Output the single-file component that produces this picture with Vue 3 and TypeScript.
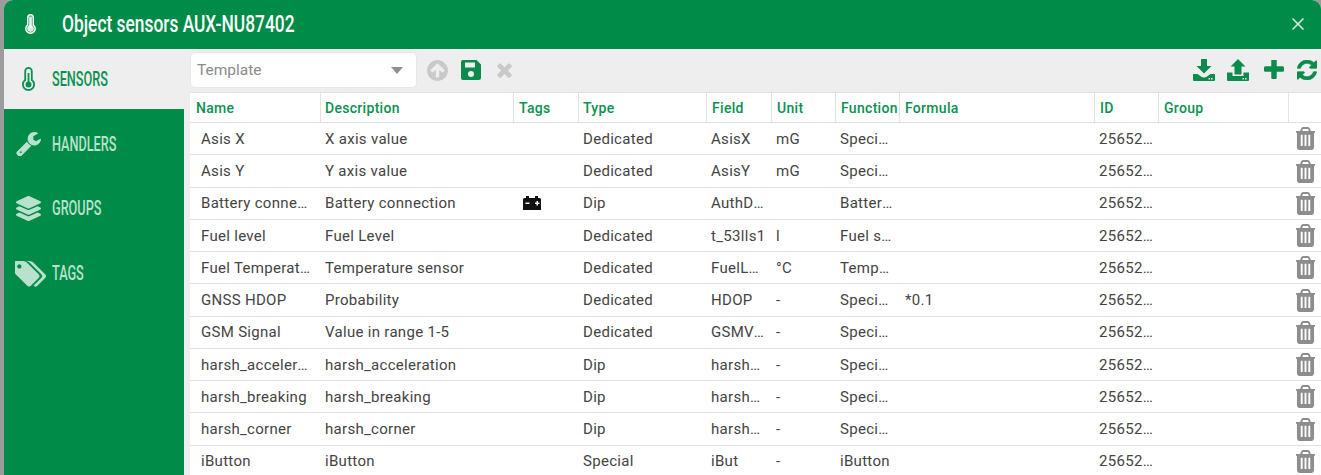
<script setup lang="ts">
interface SensorRow {
  name: string;
  description: string;
  tag?: boolean;
  type: string;
  field: string;
  unit: string;
  fn: string;
  formula: string;
}

const columns = ["Name", "Description", "Tags", "Type", "Field", "Unit", "Function", "Formula", "ID", "Group", ""];

const rows: SensorRow[] = [
  { name: "Asis X", description: "X axis value", type: "Dedicated", field: "AsisX", unit: "mG", fn: "Specified", formula: "" },
  { name: "Asis Y", description: "Y axis value", type: "Dedicated", field: "AsisY", unit: "mG", fn: "Specified", formula: "" },
  { name: "Battery connection", description: "Battery connection", tag: true, type: "Dip", field: "AuthDevice", unit: "", fn: "Battery level", formula: "" },
  { name: "Fuel level", description: "Fuel Level", type: "Dedicated", field: "t_53lls1", unit: "l", fn: "Fuel sensor", formula: "" },
  { name: "Fuel Temperature", description: "Temperature sensor", type: "Dedicated", field: "FuelLevel", unit: "°C", fn: "Temperature", formula: "" },
  { name: "GNSS HDOP", description: "Probability", type: "Dedicated", field: "HDOP", unit: "-", fn: "Specified", formula: "*0.1" },
  { name: "GSM Signal", description: "Value in range 1-5", type: "Dedicated", field: "GSMValue", unit: "-", fn: "Specified", formula: "" },
  { name: "harsh_acceleration", description: "harsh_acceleration", type: "Dip", field: "harsh_acc", unit: "-", fn: "Specified", formula: "" },
  { name: "harsh_breaking", description: "harsh_breaking", type: "Dip", field: "harsh_br", unit: "-", fn: "Specified", formula: "" },
  { name: "harsh_corner", description: "harsh_corner", type: "Dip", field: "harsh_co", unit: "-", fn: "Specified", formula: "" },
  { name: "iButton", description: "iButton", type: "Special", field: "iBut", unit: "-", fn: "iButton", formula: "" },
];

const tabs = [
  { label: "SENSORS", icon: "thermo", active: true },
  { label: "HANDLERS", icon: "wrench", active: false },
  { label: "GROUPS", icon: "layers", active: false },
  { label: "TAGS", icon: "tags", active: false },
];

const wrench = "M448 1472q0-26-19-45t-45-19-45 19-19 45 19 45 45 19 45-19 19-45zm644-420l-682 682q-37 37-90 37-52 0-91-37l-106-108q-38-36-38-90 0-53 38-91l681-681q39 98 114.5 173.5t173.5 114.5zm634-435q0 39-23 106-47 134-164.5 217.5t-258.5 83.5q-185 0-316.5-131.5t-131.5-316.5 131.5-316.5 316.5-131.5q58 0 121.5 16.5t107.5 46.5q16 11 16 28t-16 28l-293 169v224l193 107q5-3 79-48.5t135.5-81 70.5-35.5q15 0 23.5 10t8.5 25z";
const layers = "M12.41 148.02l232.94 105.67c6.8 3.09 14.49 3.09 21.29 0l232.94-105.67c16.55-7.51 16.55-32.52 0-40.03L266.65 2.31a25.607 25.607 0 0 0-21.29 0L12.41 107.98c-16.55 7.51-16.55 32.53 0 40.04zm487.18 88.28l-58.09-26.33-161.64 73.27c-7.56 3.43-15.59 5.17-23.86 5.17s-16.29-1.74-23.86-5.17L70.51 209.97l-58.1 26.33c-16.55 7.5-16.55 32.5 0 40l232.94 105.59c6.8 3.08 14.49 3.08 21.29 0L499.59 276.3c16.55-7.5 16.55-32.5 0-40zm0 127.8l-57.87-26.23-161.86 73.37c-7.56 3.43-15.59 5.17-23.86 5.17s-16.29-1.74-23.86-5.17L70.29 337.87 12.41 364.1c-16.55 7.5-16.55 32.5 0 40l232.94 105.59c6.8 3.08 14.49 3.08 21.29 0L499.59 404.1c16.55-7.5 16.55-32.5 0-40z";
const tags = "M384 448q0-53-37.5-90.5t-90.5-37.5-90.5 37.5-37.5 90.5 37.5 90.5 90.5 37.5 90.5-37.5 37.5-90.5zm1067 576q0 53-37 90l-491 492q-39 37-91 37-53 0-90-37l-715-716q-38-37-64.5-101t-26.5-117v-416q0-52 38-90t90-38h416q53 0 117 26.5t102 64.5l715 714q37 39 37 91zm384 0q0 53-37 90l-491 492q-39 37-91 37-36 0-59-14t-53-45l470-470q37-37 37-90 0-52-37-91l-715-714q-38-38-102-64.5t-117-26.5h224q53 0 117 26.5t102 64.5l715 714q37 39 37 91z";
const refresh = "M1639 1056q0 5-1 7-64 268-268 434.5t-478 166.5q-146 0-282.5-55t-243.5-157l-129 129q-19 19-45 19t-45-19-19-45v-448q0-26 19-45t45-19h448q26 0 45 19t19 45-19 45l-137 137q71 66 161 102t187 36q134 0 250-65t186-179q11-17 53-117 8-23 30-23h192q13 0 22.5 9.5t9.5 22.5zm25-800v448q0 26-19 45t-45 19h-448q-26 0-45-19t-19-45 19-45l138-138q-148-137-349-137-134 0-250 65t-186 179q-11 17-53 117-8 23-30 23h-199q-13 0-22.5-9.5t-9.5-22.5v-7q65-268 270-434.5t480-166.5q146 0 284 55.5t245 156.5l130-129q19-19 45-19t45 19 19 45z";
const circleUp = "M1412 895q0-27-18-45l-362-362-91-91q-18-18-45-18t-45 18l-91 91-362 362q-18 18-18 45t18 45l91 91q18 18 45 18t45-18l189-189v502q0 26 19 45t45 19h128q26 0 45-19t19-45v-502l189 189q19 19 45 19t45-19l91-91q18-18 18-45zm252-1q0 209-103 385.5t-279.5 279.5-385.5 103-385.5-103-279.5-279.5-103-385.5 103-385.5 279.5-279.5 385.5-103 385.5 103 279.5 279.5 103 385.5z";
const times = "M1490 1322q0 40-28 68l-136 136q-28 28-68 28t-68-28l-294-294-294 294q-28 28-68 28t-68-28l-136-136q-28-28-28-68t28-68l294-294-294-294q-28-28-28-68t28-68l136-136q28-28 68-28t68 28l294 294 294-294q28-28 68-28t68 28l136 136q28 28 28 68t-28 68l-294 294 294 294q28 28 28 68z";
const plus = "M1600 736v192q0 40-28 68t-68 28h-416v416q0 40-28 68t-68 28h-192q-40 0-68-28t-28-68v-416h-416q-40 0-68-28t-28-68v-192q0-40 28-68t68-28h416v-416q0-40 28-68t68-28h192q40 0 68 28t28 68v416h416q40 0 68 28t28 68z";
const trash = "M704 1376v-704q0-14-9-23t-23-9h-64q-14 0-23 9t-9 23v704q0 14 9 23t23 9h64q14 0 23-9t9-23zm256 0v-704q0-14-9-23t-23-9h-64q-14 0-23 9t-9 23v704q0 14 9 23t23 9h64q14 0 23-9t9-23zm256 0v-704q0-14-9-23t-23-9h-64q-14 0-23 9t-9 23v704q0 14 9 23t23 9h64q14 0 23-9t9-23zm-544-992h448l-48-117q-7-9-17-11h-317q-10 2-17 11zm928 32v64q0 14-9 23t-23 9h-96v948q0 83-47 143.5t-113 60.5h-832q-66 0-113-58.5t-47-141.5v-952h-96q-14 0-23-9t-9-23v-64q0-14 9-23t23-9h309l70-167q15-37 54-63t79-26h320q40 0 79 26t54 63l70 167h309q14 0 23 9t9 23z";
const thermo = "M6.5 0a4.2 4.2 0 0 0-4.2 4.2v8.3a6.5 6.500 0 1 0 8.400 0V4.200A4.200 4.200 0 0 0 6.500 0zm0 1.800a2.400 2.400 0 0 1 2.400 2.400v9.260a4.700 4.700 0 1 1-4.800 0V4.200a2.400 2.400 0 0 1 2.400-2.400z";
</script>

<template>
  <div class="page">
    <div class="window">
      <header class="titlebar">
        <svg class="title-icon" viewBox="0 0 13 24">
          <path fill="#fff" fill-rule="evenodd" :d="thermo" />
          <rect x="4.8" y="3" width="3.4" height="14" fill="#fff" opacity="0.85" />
          <circle cx="6.500" cy="17.500" r="4" fill="#fff" opacity="0.85" />
        </svg>
        <span class="title">Object sensors AUX-NU87402</span>
        <button class="close" type="button">
          <svg viewBox="0 0 14 14"><path d="M1.500 1.500l11 11M12.500 1.500l-11 11" stroke="#fff" stroke-width="1.500" fill="none" opacity="0.85" /></svg>
        </button>
      </header>

      <div class="body">
        <aside class="sidebar">
          <div v-for="tab in tabs" :key="tab.label" class="tab" :class="{ active: tab.active }">
            <span class="tab-icon">
              <svg v-if="tab.icon === 'thermo'" class="ic-thermo" viewBox="0 0 13 24">
                <path fill="currentColor" fill-rule="evenodd" :d="thermo" />
                <rect x="5.600" y="6" width="1.800" height="11" fill="currentColor" />
                <circle cx="6.500" cy="17.500" r="3" fill="currentColor" />
              </svg>
              <svg v-else-if="tab.icon === 'wrench'" class="ic-wrench" viewBox="64 64 1664 1664"><path fill="currentColor" :d="wrench" /></svg>
              <svg v-else-if="tab.icon === 'layers'" class="ic-layers" viewBox="0 0 512 512"><path fill="currentColor" :d="layers" /></svg>
              <svg v-else class="ic-tags" viewBox="0 128 1836 1536"><path fill="currentColor" :d="tags" /></svg>
            </span>
            <span class="tab-label">{{ tab.label }}</span>
          </div>
        </aside>

        <main class="content">
          <div class="toolbar">
            <div class="select">
              <span>Template</span>
              <i class="caret"></i>
            </div>
            <svg class="tool circle-up" viewBox="128 128 1536 1536"><path :d="circleUp" /></svg>
            <svg class="tool save" viewBox="0 0 20 20">
              <path fill-rule="evenodd" d="M2 0h13.500L20 4.500V18a2 2 0 0 1-2 2H2a2 2 0 0 1-2-2V2a2 2 0 0 1 2-2zm2 2.500v5h10v-5H4zM10 11a3 3 0 1 0 0 6 3 3 0 0 0 0-6z" />
            </svg>
            <svg class="tool cross" viewBox="210 340 1290 1220"><path :d="times" /></svg>
            <div class="tools-right">
              <svg class="tool dl" viewBox="0 0 22 22">
                <path d="M8 0h6v7h4.500L11 14.500 3.500 7H8z" />
                <path fill-rule="evenodd" d="M0 15h4.500L8 17.500c.8.7 1.800 1 3 1s2.200-.3 3-1l3.500-2.500H22v6a1 1 0 0 1-1 1H1a1 1 0 0 1-1-1zm15.500 4h1.500v1.500h-1.500zm2.500 0h1.500v1.500H18z" />
              </svg>
              <svg class="tool ul" viewBox="0 0 22 22">
                <path d="M11 0l7.500 7.500H14.500v8h-7v-8H3.500z" />
                <path fill-rule="evenodd" d="M0 13.500h5.500v3.500h11v-3.500H22V21a1 1 0 0 1-1 1H1a1 1 0 0 1-1-1zm15.500 5.500h1.500v1.500h-1.500zm2.500 0h1.500v1.500H18z" />
              </svg>
              <svg class="tool add" viewBox="192 192 1408 1408"><path :d="plus" /></svg>
              <svg class="tool sync" viewBox="128 128 1536 1536"><path :d="refresh" /></svg>
            </div>
          </div>

          <div class="grid">
            <div class="row head">
              <div v-for="(col, i) in columns" :key="i" class="cell">{{ col }}</div>
            </div>
            <div v-for="row in rows" :key="row.name" class="row">
              <div class="cell first">{{ row.name }}</div>
              <div class="cell">{{ row.description }}</div>
              <div class="cell tag-cell">
                <svg v-if="row.tag" class="battery" viewBox="0 0 18 14">
                  <path fill-rule="evenodd" d="M3 0h3v2h6V0h3v2h1.500A1.500 1.500 0 0 1 18 3.500V14H0V3.500A1.500 1.500 0 0 1 1.500 2H3zM2.500 6.500v1.500h4V6.500zm9.500 0v1.500h1.500v1.500h1.500V8h1.500V6.500H15V5h-1.500v1.500z" />
                </svg>
              </div>
              <div class="cell">{{ row.type }}</div>
              <div class="cell field">{{ row.field }}</div>
              <div class="cell">{{ row.unit }}</div>
              <div class="cell">{{ row.fn }}</div>
              <div class="cell formula">{{ row.formula }}</div>
              <div class="cell id">256521234</div>
              <div class="cell"></div>
              <div class="cell del">
                <svg viewBox="256 128 1280 1536"><path :d="trash" /></svg>
              </div>
            </div>
          </div>
        </main>
      </div>
    </div>
  </div>
</template>

<style>
html,
body {
  margin: 0;
  overflow: hidden;
}
</style>

<style scoped>
.page {
  display: flex;
  height: 475px;
  padding-left: 4px;
  background: #9c9c9c;
  overflow: hidden;
  font-family: Roboto, "Liberation Sans", sans-serif;
}

.window {
  flex: 1;
  min-width: 0;
  display: flex;
  flex-direction: column;
  border-radius: 9px 9px 0 0;
  overflow: hidden;
  background: #eeeeee;
}

.titlebar {
  flex: none;
  height: 49px;
  display: flex;
  align-items: center;
  background: #008b48;
  color: #fff;
}

.title-icon {
  width: 11px;
  height: 20px;
  margin-left: 21px;
  margin-bottom: 2px;
}

.title {
  display: inline-block;
  margin-left: 26px;
  font-size: 23px;
  font-weight: 500;
  white-space: nowrap;
  transform: scaleX(0.755);
  transform-origin: left center;
}

.close {
  margin-left: auto;
  margin-right: 16px;
  margin-bottom: 2px;
  width: 14px;
  height: 14px;
  padding: 0;
  border: 0;
  background: none;
}

.close svg {
  display: block;
  width: 14px;
  height: 14px;
}

.body {
  flex: 1;
  min-height: 0;
  display: flex;
}

.sidebar {
  flex: none;
  width: 180px;
  display: flex;
  flex-direction: column;
  gap: 4.9px;
  background: #008b48;
}

.tab {
  height: 60px;
  display: flex;
  align-items: center;
  color: #b9e1cd;
}

.tab.active {
  background: #eeeeee;
  color: #0b9150;
}

.tab-icon {
  width: 48px;
  display: flex;
  justify-content: center;
}

.tab-icon svg {
  display: block;
}

.ic-thermo {
  width: 13px;
  height: 24px;
}

.ic-wrench {
  width: 25px;
  height: 25px;
}

.ic-layers {
  width: 25px;
  height: 25px;
}

.ic-tags {
  width: 31px;
  height: 26px;
  margin-left: 5px;
}

.tab-label {
  display: inline-block;
  margin-top: 0.4px;
  font-size: 19.5px;
  font-weight: 500;
  white-space: nowrap;
  transform: scaleX(0.65);
  transform-origin: left center;
}

.content {
  flex: 1;
  min-width: 0;
  padding-left: 6px;
}

.toolbar {
  height: 43px;
  display: flex;
  align-items: center;
  box-sizing: border-box;
  padding-bottom: 1px;
}

.select {
  width: 227px;
  height: 36px;
  box-sizing: border-box;
  display: flex;
  align-items: center;
  justify-content: space-between;
  padding: 0 13px 0 6px;
  background: #fff;
  border: 1px solid #e8e8e8;
  border-radius: 5px;
  color: #8a8a8a;
  font-size: 15.5px;
}

.caret {
  width: 0;
  height: 0;
  border-left: 6px solid transparent;
  border-right: 6px solid transparent;
  border-top: 7px solid #8f8f8f;
}

.tool {
  display: block;
  flex: none;
  fill: #0b8c4c;
}

.circle-up {
  width: 21px;
  height: 21px;
  margin-left: 10px;
  fill: #c9c9c9;
}

.save {
  width: 20px;
  height: 20px;
  margin-left: 13px;
}

.cross {
  width: 16px;
  height: 15px;
  margin-left: 15px;
  fill: #c9c9c9;
}

.tools-right {
  margin-left: auto;
  display: flex;
  align-items: center;
  padding-right: 4px;
}

.dl,
.ul {
  width: 22px;
  height: 22px;
  margin-right: 12px;
}

.add {
  width: 20px;
  height: 20px;
  margin-left: 3px;
  margin-right: 13px;
}

.sync {
  width: 20px;
  height: 20px;
  stroke: #0b8c4c;
  stroke-width: 50;
}

.grid {
  background: #fff;
  border-top: 1px solid #e2e2e2;
}

.row {
  display: grid;
  grid-template-columns: 131px 193px 65px 128px 65px 64px 64px 195px 64px 130px 1fr;
  height: 32.25px;
  box-sizing: border-box;
  border-bottom: 1px solid #e0e0e0;
  align-items: center;
  font-size: 15px;
  letter-spacing: 0.3px;
  color: #444;
}

.row.head {
  height: 30.15px;
  align-items: stretch;
  font-size: 14px;
  font-weight: 500;
  letter-spacing: 0.3px;
  color: #0b9150;
}

.cell {
  min-width: 0;
  padding: 0 7px 0 4px;
  white-space: nowrap;
  overflow: hidden;
  text-overflow: ellipsis;
}

.head .cell {
  display: flex;
  align-items: center;
  padding: 0 2px 0 5px;
  border-right: 1px solid #e2e2e2;
}

.head .cell:first-child {
  padding-left: 6px;
}

.head .cell:nth-child(2),
.head .cell:nth-child(4) {
  padding-left: 4px;
}

.head .cell:last-child {
  border-right: 0;
}

.first {
  padding: 0 9px 0 11px;
}

.field {
  padding-right: 6px;
}

.formula {
  padding-left: 5px;
}

.id {
  padding-right: 3px;
}

.tag-cell {
  padding-left: 9px;
  overflow: visible;
}

.battery {
  display: block;
  width: 18px;
  height: 14px;
  fill: #111;
}

.del {
  padding: 0 0 0 7px;
  overflow: visible;
}

.del svg {
  display: block;
  width: 19px;
  height: 23px;
  fill: #8d8d8d;
}
</style>
